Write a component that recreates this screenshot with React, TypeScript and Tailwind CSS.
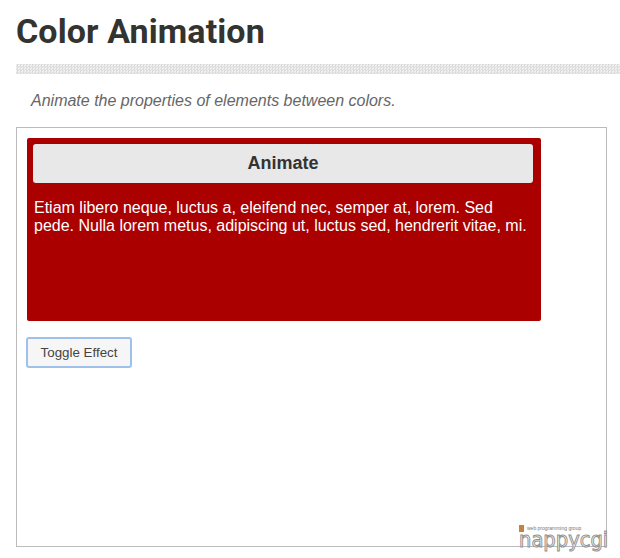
export default function App() {
  return (
    <div className="w-[620px] h-[558px] bg-white overflow-hidden pl-4 font-['Liberation_Sans',Arial,sans-serif]">
      <h1 className="h-[64px] pt-[11px] text-[34px] leading-[40px] font-bold text-[#333330] tracking-[0.1px] font-['Roboto',sans-serif]">
        Color Animation
      </h1>
      <div className="h-[10px] bg-[repeating-conic-gradient(#dcdcdc_0_25%,#f0f0f0_0_50%)] bg-[length:3px_3px]" />
      <p className="mt-[17px] ml-[15px] h-[36px] text-[16px] leading-[20px] italic text-[#666666]">
        Animate the properties of elements between colors.
      </p>
      <div className="relative w-[591px] h-[420px] border border-[#bbbbbb] pt-[10px] pl-[10px]">
        <div className="w-[514px] h-[183px] rounded-[2px] bg-[#aa0000] p-[6px] pr-[8px] text-white">
          <div className="h-[39px] rounded-[3px] bg-[#e8e8e8] flex items-center justify-center text-[18px] font-bold text-[#333333]">
            Animate
          </div>
          <p className="mt-[16px] pl-px text-[16px] leading-[18px]">
            Etiam libero neque, luctus a, eleifend nec, semper at, lorem. Sed pede. Nulla lorem metus, adipiscing ut, luctus sed, hendrerit vitae, mi.
          </p>
        </div>
        <button className="mt-[16px] -ml-px block w-[106px] h-[31px] rounded-[3px] border-2 border-[#9fc0e8] bg-[#f6f6f6] text-[13.33px] text-[#444444]">
          Toggle Effect
        </button>
        <div className="absolute left-[502px] top-[397px] w-[92px] h-[24px]">
          <div className="flex items-center gap-[3px] h-[7px]">
            <span className="w-[5px] h-[7px] bg-[#c8803f]" />
            <span className="text-[5px] leading-[5px] text-[#777777] whitespace-nowrap">web programming group</span>
          </div>
          <div className="origin-left scale-x-[0.93] text-[21px] leading-[17px] text-white [-webkit-text-stroke:1px_#8f8f8f] font-['DejaVu_Sans',sans-serif] whitespace-nowrap">
            nappycgi
          </div>
        </div>
      </div>
    </div>
  );
}
